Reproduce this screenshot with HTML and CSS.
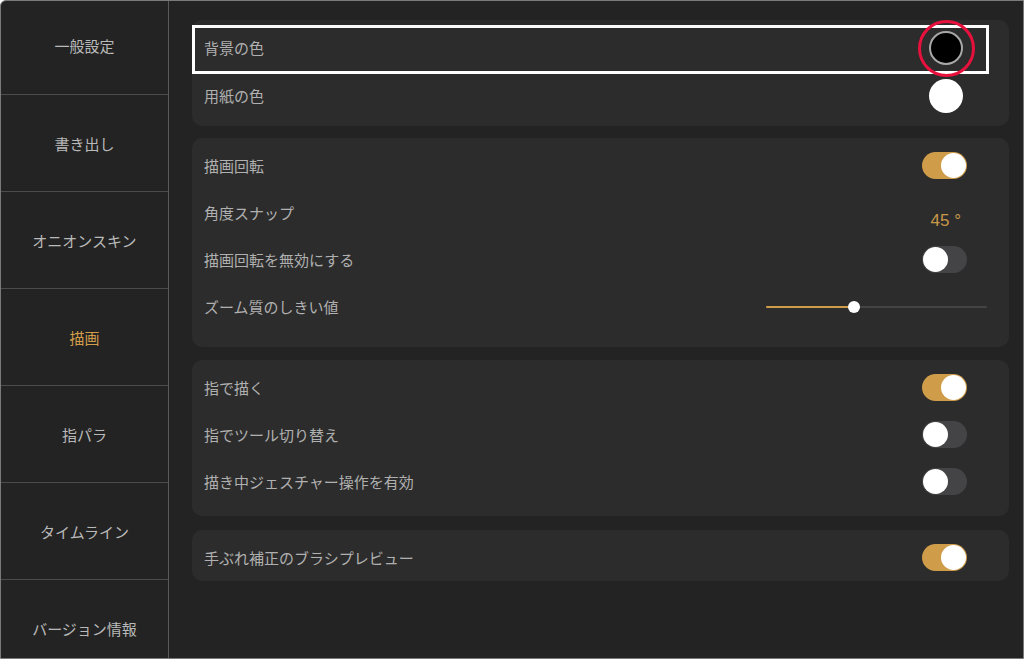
FILE: index.html
```html
<!DOCTYPE html>
<html lang="ja">
<head>
  <meta charset="UTF-8">
  <meta name="viewport" content="width=device-width, initial-scale=1.0">
  <title>設定</title>
  <link rel="stylesheet" href="styles.css">
</head>
<body>
  <div class="screen">
    <nav class="sidebar">
      <ul class="menu">
        <li>一般設定</li>
        <li>書き出し</li>
        <li>オニオンスキン</li>
        <li class="active">描画</li>
        <li>指パラ</li>
        <li>タイムライン</li>
        <li>バージョン情報</li>
      </ul>
    </nav>

    <main class="content">
      <section class="panel panel-colors">
        <div class="row">
          <span class="label">背景の色</span>
          <span class="swatch swatch-black"></span>
          <div class="highlight"></div>
          <div class="ring"></div>
        </div>
        <div class="row">
          <span class="label">用紙の色</span>
          <span class="swatch swatch-white"></span>
        </div>
      </section>

      <section class="panel panel-draw">
        <div class="row">
          <span class="label">描画回転</span>
          <span class="toggle on"></span>
        </div>
        <div class="row">
          <span class="label">角度スナップ</span>
          <span class="value">45 °</span>
        </div>
        <div class="row">
          <span class="label">描画回転を無効にする</span>
          <span class="toggle"></span>
        </div>
        <div class="row">
          <span class="label">ズーム質のしきい値</span>
          <div class="slider">
            <div class="slider-fill" style="width: 40%"></div>
            <div class="slider-thumb" style="left: 40%"></div>
          </div>
        </div>
      </section>

      <section class="panel panel-finger">
        <div class="row">
          <span class="label">指で描く</span>
          <span class="toggle on"></span>
        </div>
        <div class="row">
          <span class="label">指でツール切り替え</span>
          <span class="toggle"></span>
        </div>
        <div class="row">
          <span class="label">描き中ジェスチャー操作を有効</span>
          <span class="toggle"></span>
        </div>
      </section>

      <section class="panel panel-brush">
        <div class="row">
          <span class="label">手ぶれ補正のブラシプレビュー</span>
          <span class="toggle on"></span>
        </div>
      </section>
    </main>
  </div>
</body>
</html>
```

FILE: styles.css
```css
* {
  box-sizing: border-box;
}
body {
  margin: 0;
  padding: 0;
  background-color: #ffffff;
  font-family: "Noto Sans CJK JP", "Noto Sans", sans-serif;
}
.screen {
  display: flex;
  width: 1024px;
  height: 659px;
  border: 1px solid #7a7a7a;
  border-radius: 6px 0 0 0;
  background-color: #232323;
  overflow: hidden;
}
.sidebar {
  width: 168px;
  flex-shrink: 0;
  border-right: 1px solid #5a5a5a;
  overflow: hidden;
}
.menu {
  list-style: none;
  margin: -4px 0 0;
  padding: 0;
}
.menu li {
  height: 97px;
  display: flex;
  align-items: center;
  justify-content: center;
  border-bottom: 1px solid #4c4c4c;
  color: #b9b9b9;
  font-size: 15px;
}
.menu li:first-child {
  height: 98px;
}
.menu li.active {
  color: #d29d4a;
}
.content {
  flex: 1;
  padding: 19px 14px 0 23px;
}
.panel {
  background-color: #2c2c2c;
  border-radius: 10px;
  padding: 4px 0 0;
  margin-bottom: 12px;
}
.panel-colors {
  padding-bottom: 6px;
}
.panel-draw {
  padding-bottom: 17px;
  margin-bottom: 13px;
}
.panel-finger {
  padding-bottom: 11px;
  margin-bottom: 14px;
}
.row {
  position: relative;
  display: flex;
  align-items: center;
  justify-content: space-between;
  height: 47px;
  padding: 0 42px 0 12px;
}
.panel-colors .row {
  height: 48px;
}
.label {
  color: #b0b0b0;
  font-size: 15px;
  line-height: 20px;
}
.swatch {
  width: 34px;
  height: 34px;
  border-radius: 50%;
  margin-right: 4px;
}
.swatch-black {
  background-color: #000;
  border: 2px solid #a8a8a8;
  box-shadow: inset 0 0 0 1px #000;
}
.swatch-white {
  background-color: #fff;
}
.highlight {
  position: absolute;
  left: 0;
  top: 1px;
  width: 797px;
  height: 49px;
  border: 3px solid #ffffff;
}
.ring {
  position: absolute;
  right: 34px;
  top: -4px;
  width: 57px;
  height: 57px;
  border: 3px solid #e8103c;
  border-radius: 50%;
}
.value {
  color: #c9974a;
  font-family: "Liberation Sans", Arial, sans-serif;
  font-size: 17px;
  margin: 16px 6px 0 0;
}
.toggle {
  position: relative;
  width: 45px;
  height: 27px;
  border-radius: 14px;
  background-color: #444446;
}
.toggle::after {
  content: "";
  position: absolute;
  top: 1px;
  left: 1px;
  width: 25px;
  height: 25px;
  border-radius: 50%;
  background-color: #ffffff;
}
.toggle.on {
  background-color: #cf9c4a;
}
.toggle.on::after {
  left: 19px;
}
.slider {
  position: relative;
  width: 221px;
  height: 2px;
  margin-right: -20px;
  background-color: #444446;
  border-radius: 1px;
}
.slider-fill {
  height: 2px;
  background-color: #cf9c4a;
  border-radius: 1px;
}
.slider-thumb {
  position: absolute;
  top: -5px;
  width: 12px;
  height: 12px;
  margin-left: -6px;
  border-radius: 50%;
  background-color: #ffffff;
}
```
